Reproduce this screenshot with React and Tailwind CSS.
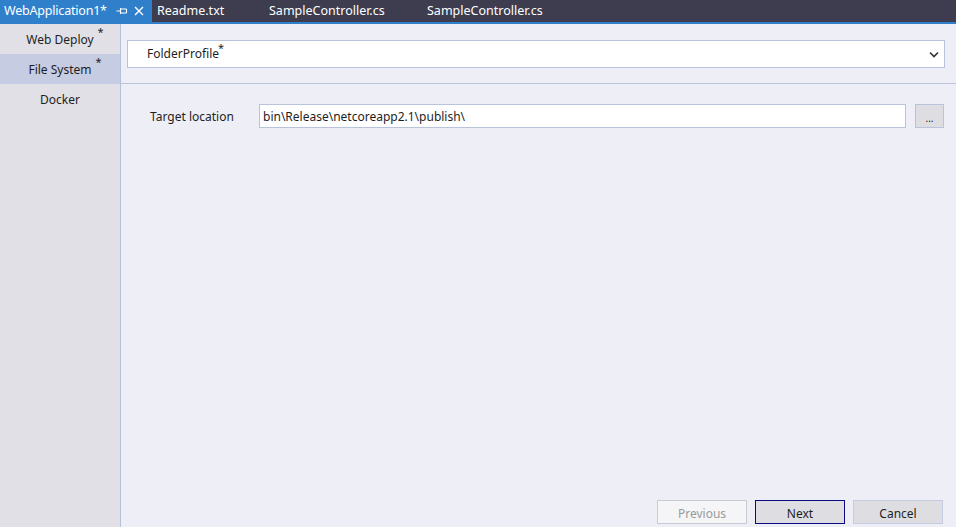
import React from "react";

const font = { fontFamily: '"Segoe UI", "Noto Sans", sans-serif' };

function Btn({ children, className = "" }) {
  return (
    <div className={`w-[90px] h-[24px] flex items-center justify-center text-[12px] pt-[4px] ${className}`}>{children}</div>
  );
}

export default function App() {
  return (
    <div className="w-[956px] h-[527px] flex flex-col bg-[#eeeff6] overflow-hidden text-[#1e1e1e]" style={font}>
      {/* tab bar */}
      <div className="h-[22px] flex bg-[#3d3d4f] text-white text-[12.5px] shrink-0">
        <div className="w-[152px] bg-[#2f7fcb] flex items-center pl-[4px] shrink-0">
          <span className="tracking-[-0.2px]">WebApplication1*</span>
          <svg width="12" height="10" viewBox="0 0 12 10" className="ml-[9px]">
            <path d="M0.5 5h4M4.5 2v6M4.5 3h6M4.5 7h6M10.5 3v4" stroke="white" strokeWidth="1.1" fill="none" />
          </svg>
          <svg width="10" height="10" viewBox="0 0 10 10" className="ml-[6px]">
            <path d="M1 1L9 9M9 1L1 9" stroke="white" strokeWidth="1.4" />
          </svg>
        </div>
        <div className="flex items-center pl-[5px] w-[112px]">Readme.txt</div>
        <div className="flex items-center w-[163px] pl-[5px]">SampleController.cs</div>
        <div className="flex items-center">SampleController.cs</div>
      </div>
      <div className="h-[2px] bg-[#2f7fcb] shrink-0" />
      <div className="flex flex-1">
        {/* sidebar */}
        <div className="w-[121px] bg-[#e0e0e6] border-r border-[#b5c1dc] flex flex-col text-[12px]">
          <div className="h-[30px] flex items-center justify-center pt-[2px]">
            <span className="relative">Web Deploy<span className="absolute -top-[7px] -right-[10px] text-[11px]">*</span></span>
          </div>
          <div className="h-[30px] flex items-center justify-center bg-[#c6cce2] pt-[2px]">
            <span className="relative">File System<span className="absolute -top-[7px] -right-[10px] text-[11px]">*</span></span>
          </div>
          <div className="h-[30px] flex items-center justify-center pt-[2px]">Docker</div>
        </div>
        {/* main */}
        <div className="flex-1 flex flex-col">
          <div className="h-[60px] border-b border-[#b9c3dc] pl-[6px] pr-[11px] pt-[16px]">
            <div className="h-[28px] bg-white border border-[#b9c3dc] flex items-center justify-between pl-[19px] pr-[5px] text-[12px]">
              <span className="relative">FolderProfile<span className="absolute -top-[5px] -right-[5px] text-[11px]">*</span></span>
              <svg width="10" height="7" viewBox="0 0 10 7">
                <path d="M1 1.5L5 5.5L9 1.5" stroke="#333" strokeWidth="1.6" fill="none" />
              </svg>
            </div>
          </div>
          <div className="flex items-center pt-[20px] text-[12px]">
            <div className="w-[138px] pl-[29px] pt-[2px]">Target location</div>
            <div className="w-[647px] h-[24px] bg-white border border-[#b9c3dc] flex items-center pl-[3px] pt-[2px]">bin\Release\netcoreapp2.1\publish\</div>
            <div className="ml-[9px] w-[29px] h-[24px] bg-[#dedee2] border border-[#b9c3dc] flex items-center justify-center text-[10px] leading-none pt-[4px]">...</div>
          </div>
          <div className="flex-1" />
          <div className="flex justify-end gap-[8px] pr-[13px] pb-[3px]">
            <Btn className="bg-[#f5f5f7] border border-[#c9ccd3] text-[#9a9a9a]">Previous</Btn>
            <Btn className="bg-[#dedee2] border border-[#0b0b7f]">Next</Btn>
            <Btn className="bg-[#dedee2] border border-[#c5cbe0]">Cancel</Btn>
          </div>
        </div>
      </div>
    </div>
  );
}
